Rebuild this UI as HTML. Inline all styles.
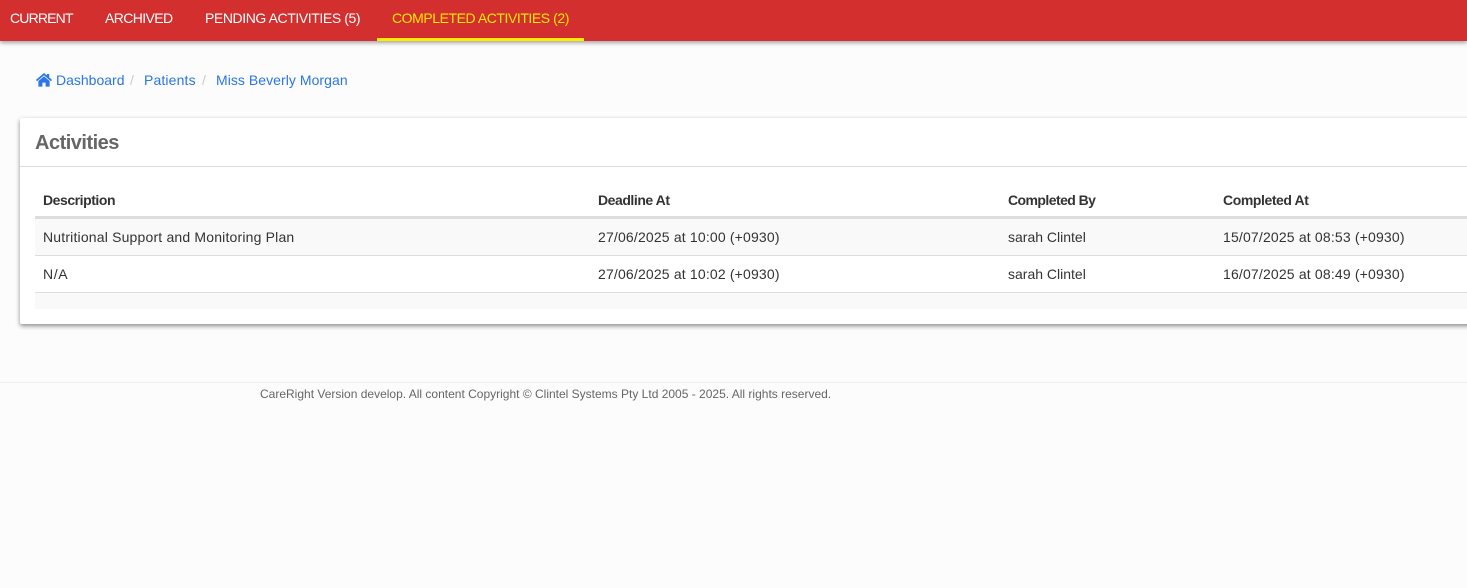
<!DOCTYPE html>
<html lang="en">
<head>
<meta charset="utf-8">
<title>Activities</title>
<style>
html,body{margin:0;padding:0;width:1467px;height:588px;overflow:hidden;background:#fcfcfc;font-family:"Liberation Sans",Arial,sans-serif;}
.t{position:absolute;white-space:nowrap;line-height:20px;}
#nav{position:absolute;left:0;top:0;width:1467px;height:41px;background:#d32f2f;box-shadow:0 2px 4px rgba(0,0,0,.35);}
.n{font-size:14px;color:#fff;top:8px;}
#ul{position:absolute;left:377px;top:38px;width:207px;height:3px;background:#ffea00;}
.b{font-size:14px;color:#2a75e8;top:70px;}
.s{font-size:14px;color:#ccc;top:70px;}
#card{position:absolute;left:20px;top:118px;width:1460px;height:206px;background:#fff;border-radius:2px;box-shadow:0 2px 5px rgba(0,0,0,.45);}
.l{position:absolute;}
.h{font-size:14px;font-weight:bold;color:#333;top:190px;}
.c{font-size:14px;color:#333;}
.d{letter-spacing:.17px;}
</style>
</head>
<body>
<div id="nav"></div>
<div class="t n" style="left:10px;letter-spacing:-.82px">CURRENT</div>
<div class="t n" style="left:105px;letter-spacing:-.6px">ARCHIVED</div>
<div class="t n" style="left:205px;letter-spacing:-.41px">PENDING ACTIVITIES (5)</div>
<div class="t n" style="left:392px;color:#ffea00;letter-spacing:-.44px">COMPLETED ACTIVITIES (2)</div>
<div id="ul"></div>

<svg style="position:absolute;left:36px;top:73px" width="16" height="14" viewBox="0 0 16 14"><path fill="#2a75e8" d="M8 0 L11 2.5 V1 H13.2 V4.4 L16 6.9 L15 8.2 L8 2.4 L1 8.2 L0 6.9 Z M2.4 8 L8 3.4 L13.6 8 V13.6 H9.6 V9.6 H6.4 V13.6 H2.4 Z"/></svg>
<div class="t b" style="left:56px">Dashboard</div>
<div class="t s" style="left:130px">/</div>
<div class="t b" style="left:144px;letter-spacing:.14px">Patients</div>
<div class="t s" style="left:202px">/</div>
<div class="t b" style="left:216px;letter-spacing:.05px">Miss Beverly Morgan</div>

<div id="card"></div>
<div class="l" style="left:20px;top:166px;width:1447px;height:1px;background:#ddd"></div>
<div class="t" style="left:35px;top:133px;font-size:20px;font-weight:bold;color:#666;letter-spacing:-.5px">Activities</div>

<div class="t h" style="left:43px;letter-spacing:-.45px">Description</div>
<div class="t h" style="left:598px;letter-spacing:-.45px">Deadline At</div>
<div class="t h" style="left:1008px;letter-spacing:-.56px">Completed By</div>
<div class="t h" style="left:1223px;letter-spacing:-.42px">Completed At</div>
<div class="l" style="left:35px;top:216px;width:1432px;height:3px;background:#ddd"></div>

<div class="l" style="left:35px;top:219px;width:1432px;height:36px;background:#f9f9f9"></div>
<div class="l" style="left:35px;top:255px;width:1432px;height:1px;background:#ddd"></div>
<div class="l" style="left:35px;top:292px;width:1432px;height:1px;background:#ddd"></div>
<div class="l" style="left:35px;top:293px;width:1432px;height:16px;background:#f9f9f9"></div>

<div class="t c" style="left:43px;top:227px;letter-spacing:.18px">Nutritional Support and Monitoring Plan</div>
<div class="t c d" style="left:598px;top:227px">27/06/2025 at 10:00 (+0930)</div>
<div class="t c" style="left:1008px;top:227px">sarah Clintel</div>
<div class="t c d" style="left:1223px;top:227px">15/07/2025 at 08:53 (+0930)</div>

<div class="t c" style="left:43px;top:264px;letter-spacing:.6px">N/A</div>
<div class="t c d" style="left:598px;top:264px">27/06/2025 at 10:02 (+0930)</div>
<div class="t c" style="left:1008px;top:264px">sarah Clintel</div>
<div class="t c d" style="left:1223px;top:264px">16/07/2025 at 08:49 (+0930)</div>

<div class="l" style="left:0;top:382px;width:1467px;height:1px;background:#eee"></div>
<div class="t" style="left:260px;top:384px;font-size:12px;color:#666">CareRight Version develop. All content Copyright © Clintel Systems Pty Ltd 2005 - 2025. All rights reserved.</div>
</body>
</html>
